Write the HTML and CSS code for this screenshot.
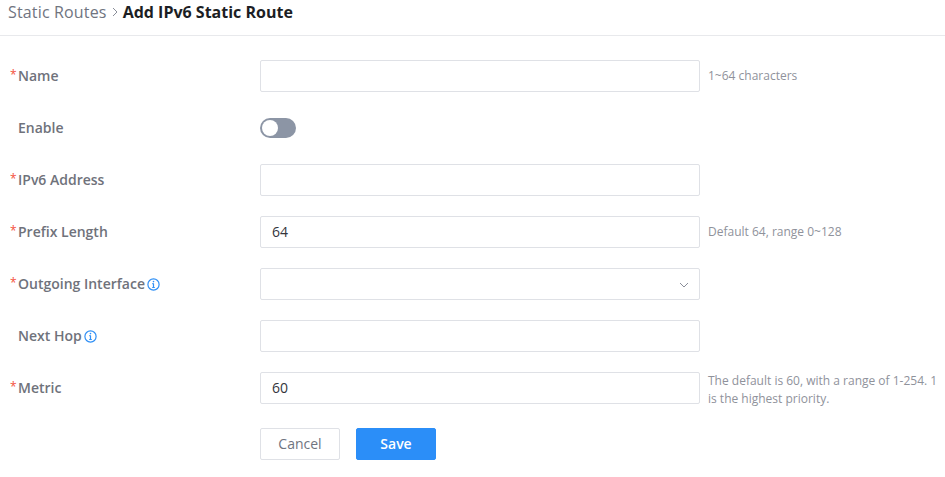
FILE: index.html
```html
<!DOCTYPE html>
<html lang="en">
<head>
<meta charset="utf-8">
<title>Add IPv6 Static Route</title>
<link rel="stylesheet" href="styles.css">
</head>
<body>
<header class="crumbs">
  <span class="crumb">Static Routes</span>
  <svg class="crumb-sep" width="8" height="10" viewBox="0 0 8 10"><path d="M2 1l4 4-4 4" fill="none" stroke="#8a8e99" stroke-width="1"/></svg>
  <strong class="crumb-current">Add IPv6 Static Route</strong>
</header>
<form class="form">
  <div class="row">
    <label class="label"><span class="star">*</span>Name</label>
    <div class="control"></div>
    <p class="hint">1~64 characters</p>
  </div>
  <div class="row">
    <label class="label"><span class="star"></span>Enable</label>
    <div class="switch-cell"><span class="switch"><span class="knob"></span></span></div>
  </div>
  <div class="row">
    <label class="label"><span class="star">*</span>IPv6 Address</label>
    <div class="control"></div>
  </div>
  <div class="row">
    <label class="label"><span class="star">*</span>Prefix Length</label>
    <div class="control">64</div>
    <p class="hint">Default 64, range 0~128</p>
  </div>
  <div class="row">
    <label class="label"><span class="star">*</span>Outgoing Interface<svg class="info" width="13" height="13" viewBox="0 0 13 13"><circle cx="6.5" cy="6.5" r="5.6" fill="none" stroke="#2f8ff5" stroke-width="1.2"/><path d="M6.5 5.6v3.9M5.3 5.7h1.2M5.2 9.5h2.6" fill="none" stroke="#2f8ff5" stroke-width="1.2"/><circle cx="6.5" cy="3.6" r=".8" fill="#2f8ff5"/></svg></label>
    <div class="control select"><svg width="10" height="6" viewBox="0 0 10 6"><path d="M1 1l4 4 4-4" fill="none" stroke="#8a8e99" stroke-width="1"/></svg></div>
  </div>
  <div class="row">
    <label class="label"><span class="star"></span>Next Hop<svg class="info" width="13" height="13" viewBox="0 0 13 13"><circle cx="6.5" cy="6.5" r="5.6" fill="none" stroke="#2f8ff5" stroke-width="1.2"/><path d="M6.5 5.6v3.9M5.3 5.7h1.2M5.2 9.5h2.6" fill="none" stroke="#2f8ff5" stroke-width="1.2"/><circle cx="6.5" cy="3.6" r=".8" fill="#2f8ff5"/></svg></label>
    <div class="control"></div>
  </div>
  <div class="row">
    <label class="label"><span class="star">*</span>Metric</label>
    <div class="control">60</div>
    <p class="hint hint-long">The default is 60, with a range of 1-254. 1 is the highest priority.</p>
  </div>
  <div class="actions">
    <button type="button" class="btn btn-cancel">Cancel</button>
    <button type="button" class="btn btn-save">Save</button>
  </div>
</form>
</body>
</html>
```
FILE: styles.css
```css
* { box-sizing: border-box; }
html, body { margin: 0; padding: 0; }
body {
  width: 945px;
  height: 477px;
  overflow: hidden;
  background: #fff;
  font-family: "Open Sans", "Noto Sans", sans-serif;
  font-size: 14px;
  color: #33353b;
}
.crumbs {
  height: 36px;
  padding: 0 0 11px 8px;
  display: flex;
  align-items: center;
  border-bottom: 1px solid #e8e9ec;
}
.crumb { font-size: 16px; color: #70747f; letter-spacing: .16px; }
.crumb-sep { margin: 0 4px 0 4px; }
.crumb-current { font-size: 16px; font-weight: 700; color: #1c1e24; }
.form { padding-top: 24px; }
.row {
  display: flex;
  align-items: center;
  height: 32px;
  margin-bottom: 20px;
}
.label {
  width: 260px;
  height: 32px;
  padding: 0 0 2px 10px;
  display: flex;
  align-items: center;
  font-weight: 600;
  color: #6f727b;
}
.star {
  width: 8px;
  height: 20px;
  color: #f4523b;
  font-size: 12px;
  font-weight: 400;
  line-height: 20px;
}
.info { margin-left: 2px; margin-top: 2px; }
.control {
  width: 440px;
  height: 32px;
  padding: 0 11px 2px;
  border: 1px solid #dfe1e6;
  border-radius: 2px;
  display: flex;
  align-items: center;
  color: #33353b;
}
.select { justify-content: flex-end; padding: 2px 10px 0 0; }
.switch-cell { width: 440px; display: flex; align-items: center; }
.switch {
  width: 36px;
  height: 20px;
  border-radius: 10px;
  background: #8c95a5;
  padding: 2px;
  display: block;
}
.knob { display: block; width: 16px; height: 16px; border-radius: 50%; background: #fff; }
.hint {
  width: 237px;
  margin: 0 0 0 8px;
  font-size: 12px;
  line-height: 18px;
  color: #8f929b;
}
.hint-long { margin-top: 4px; }
.actions { display: flex; gap: 16px; padding-left: 260px; margin-top: -16px; padding-top: 20px; }
.btn {
  width: 80px;
  height: 32px;
  border-radius: 2px;
  font: inherit;
  padding: 0 0 2px;
}
.btn-cancel { background: #fff; border: 1px solid #dfe1e6; color: #70747f; }
.btn-save { background: #2b8ef8; border: 1px solid #2b8ef8; color: #fff; font-weight: 600; }
```
